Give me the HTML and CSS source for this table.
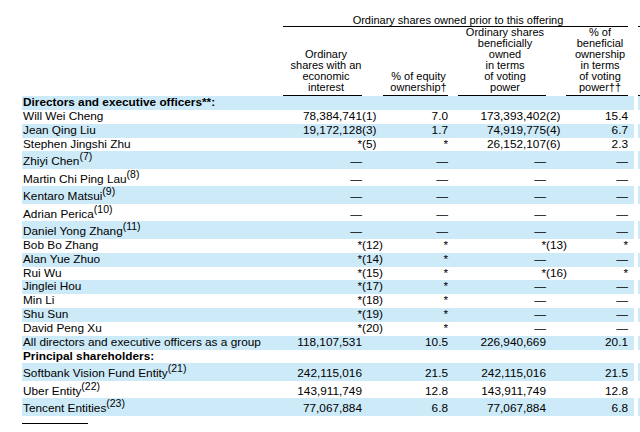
FILE: index.html
```html
<!DOCTYPE html>
<html lang="en">
<head>
<meta charset="utf-8">
<title>Ordinary shares owned prior to this offering</title>
<link rel="stylesheet" href="styles.css">
</head>
<body>
<div class="sheet">
  <div class="grid head">
    <div class="title">Ordinary shares owned prior to this offering</div>
    <div class="stub stub-top"></div>
    <div class="colh c1">Ordinary<br>shares with an<br>economic<br>interest</div>
    <div class="colh c2">% of equity<br>ownership†</div>
    <div class="colh c3">Ordinary shares<br>beneficially<br>owned<br>in terms<br>of voting<br>power</div>
    <div class="colh c4">% of<br>beneficial<br>ownership<br>in terms<br>of voting<br>power††</div>
    <div class="stub stub-bot"></div>
  </div>

  <div class="grid row alt"><div class="lbl b">Directors and executive officers**:</div></div>
  <div class="grid row"><div class="lbl">Will Wei Cheng</div><div class="num n1">78,384,741</div><div class="fn f1">(1)</div><div class="num p1">7.0</div><div class="num n2">173,393,402</div><div class="fn f2">(2)</div><div class="num p2">15.4</div></div>
  <div class="grid row alt"><div class="lbl">Jean Qing Liu</div><div class="num n1">19,172,128</div><div class="fn f1">(3)</div><div class="num p1">1.7</div><div class="num n2">74,919,775</div><div class="fn f2">(4)</div><div class="num p2">6.7</div></div>
  <div class="grid row"><div class="lbl">Stephen Jingshi Zhu</div><div class="num n1">*</div><div class="fn f1">(5)</div><div class="num p1">*</div><div class="num n2">26,152,107</div><div class="fn f2">(6)</div><div class="num p2">2.3</div></div>
  <div class="grid row tall alt"><div class="lbl">Zhiyi Chen<sup>(7)</sup></div><div class="num n1">—</div><div class="num p1">—</div><div class="num n2">—</div><div class="num p2">—</div></div>
  <div class="grid row tall"><div class="lbl">Martin Chi Ping Lau<sup>(8)</sup></div><div class="num n1">—</div><div class="num p1">—</div><div class="num n2">—</div><div class="num p2">—</div></div>
  <div class="grid row tall alt"><div class="lbl">Kentaro Matsui<sup>(9)</sup></div><div class="num n1">—</div><div class="num p1">—</div><div class="num n2">—</div><div class="num p2">—</div></div>
  <div class="grid row tall"><div class="lbl">Adrian Perica<sup>(10)</sup></div><div class="num n1">—</div><div class="num p1">—</div><div class="num n2">—</div><div class="num p2">—</div></div>
  <div class="grid row tall alt"><div class="lbl">Daniel Yong Zhang<sup>(11)</sup></div><div class="num n1">—</div><div class="num p1">—</div><div class="num n2">—</div><div class="num p2">—</div></div>
  <div class="grid row"><div class="lbl">Bob Bo Zhang</div><div class="num n1">*</div><div class="fn f1">(12)</div><div class="num p1">*</div><div class="num n2">*</div><div class="fn f2">(13)</div><div class="num p2">*</div></div>
  <div class="grid row alt"><div class="lbl">Alan Yue Zhuo</div><div class="num n1">*</div><div class="fn f1">(14)</div><div class="num p1">*</div><div class="num n2">—</div><div class="num p2">—</div></div>
  <div class="grid row"><div class="lbl">Rui Wu</div><div class="num n1">*</div><div class="fn f1">(15)</div><div class="num p1">*</div><div class="num n2">*</div><div class="fn f2">(16)</div><div class="num p2">*</div></div>
  <div class="grid row alt"><div class="lbl">Jinglei Hou</div><div class="num n1">*</div><div class="fn f1">(17)</div><div class="num p1">*</div><div class="num n2">—</div><div class="num p2">—</div></div>
  <div class="grid row"><div class="lbl">Min Li</div><div class="num n1">*</div><div class="fn f1">(18)</div><div class="num p1">*</div><div class="num n2">—</div><div class="num p2">—</div></div>
  <div class="grid row alt"><div class="lbl">Shu Sun</div><div class="num n1">*</div><div class="fn f1">(19)</div><div class="num p1">*</div><div class="num n2">—</div><div class="num p2">—</div></div>
  <div class="grid row"><div class="lbl">David Peng Xu</div><div class="num n1">*</div><div class="fn f1">(20)</div><div class="num p1">*</div><div class="num n2">—</div><div class="num p2">—</div></div>
  <div class="grid row alt"><div class="lbl">All directors and executive officers as a group</div><div class="num n1">118,107,531</div><div class="num p1">10.5</div><div class="num n2">226,940,669</div><div class="num p2">20.1</div></div>
  <div class="grid row"><div class="lbl b">Principal shareholders:</div></div>
  <div class="grid row tall alt"><div class="lbl">Softbank Vision Fund Entity<sup>(21)</sup></div><div class="num n1">242,115,016</div><div class="num p1">21.5</div><div class="num n2">242,115,016</div><div class="num p2">21.5</div></div>
  <div class="grid row tall"><div class="lbl">Uber Entity<sup>(22)</sup></div><div class="num n1">143,911,749</div><div class="num p1">12.8</div><div class="num n2">143,911,749</div><div class="num p2">12.8</div></div>
  <div class="grid row tall alt"><div class="lbl">Tencent Entities<sup>(23)</sup></div><div class="num n1">77,067,884</div><div class="num p1">6.8</div><div class="num n2">77,067,884</div><div class="num p2">6.8</div></div>

  <div class="rule"></div>
</div>
</body>
</html>
```

FILE: styles.css
```css
html, body {
  margin: 0;
  padding: 0;
  background: #ffffff;
}
body {
  width: 640px;
  height: 432px;
  overflow: hidden;
  font-family: "Liberation Sans", Arial, Helvetica, sans-serif;
  color: #000000;
}
.sheet {
  padding-left: 22px;
  width: 618px;
}
.grid {
  display: grid;
  grid-template-columns: 261px 79px 21px 65px 10px 88px 20px 62px 6px 4px 2px;
}

/* header */
.head {
  font-size: 11px;
  line-height: 11px;
  height: 96px;
}
.title {
  grid-column: 2 / 9;
  grid-row: 1;
  text-align: center;
  padding: 15px 0 0 5px;
  border-bottom: 1px solid #000;
  white-space: nowrap;
}
.stub {
  grid-column: 11;
  border-bottom: 1px solid #000;
}
.stub-top { grid-row: 1; }
.stub-bot { grid-row: 2; align-self: end; }
.colh {
  grid-row: 2;
  align-self: end;
  text-align: center;
  white-space: nowrap;
  padding: 0 0 2px 6px;
  border-bottom: 1px solid #000;
}
.c1 { grid-column: 2; padding-left: 7px; }
.c2 { grid-column: 4; }
.c3 { grid-column: 6; }
.c4 { grid-column: 8; }

/* body rows */
.row {
  height: 13.85px;
  font-size: 11.8px;
  line-height: 13.85px;
  align-items: end;
}
.row.tall {
  height: 17.5px;
}
.row.alt {
  background: linear-gradient(to right, #cdeaf8 0, #cdeaf8 612px, transparent 612px, transparent 616px, #cdeaf8 616px);
}
.lbl {
  grid-column: 1;
  padding-left: 1px;
  white-space: nowrap;
}
.b { font-weight: bold; }
.num {
  text-align: right;
  white-space: nowrap;
}
.fn { white-space: nowrap; }
.n1 { grid-column: 2; }
.f1 { grid-column: 3; }
.p1 { grid-column: 4; }
.n2 { grid-column: 6; }
.f2 { grid-column: 7; }
.p2 { grid-column: 8; }
sup {
  font-size: 10.5px;
  line-height: 0;
  vertical-align: 5px;
}
.rule {
  width: 66px;
  margin-top: 7px;
  border-top: 1px solid #000;
}
```
